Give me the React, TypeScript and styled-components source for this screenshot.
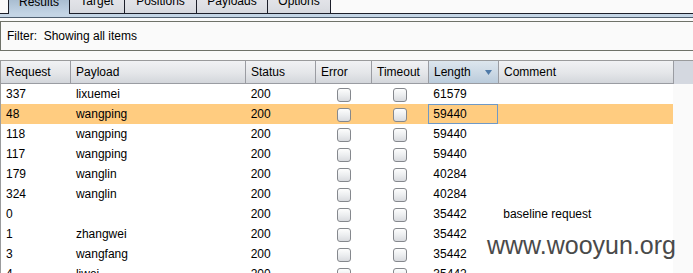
import React from "react";
import styled, { createGlobalStyle } from "styled-components";

const GlobalStyle = createGlobalStyle`
  html, body { margin: 0; padding: 0; background: #fafafa; overflow: hidden; }
  body { font-family: "Liberation Sans", Arial, sans-serif; font-size: 12px; color: #000; }
  * { box-sizing: border-box; }
`;

const Page = styled.div`
  position: relative;
  width: 693px;
  height: 273px;
  overflow: hidden;
  background: #fafafa;
`;

const TabRow = styled.div`
  display: flex;
  align-items: flex-start;
  height: 14px;
  padding-left: 8px;
  border-bottom: 1px solid #1c1f2a;
`;

const Tab = styled.div<{ $w: number; $active?: boolean; $first?: boolean }>`
  width: ${(p) => p.$w}px;
  height: ${(p) => (p.$active ? 14 : 13)}px;
  display: flex;
  align-items: flex-end;
  justify-content: center;
  overflow: hidden;
  border-right: 1px solid #1c1f2a;
  border-left: ${(p) => (p.$first ? "1px solid #1c1f2a" : "none")};
  background: ${(p) =>
    p.$active
      ? "linear-gradient(#a9bdd1, #bccee0 70%, #c4d5e5)"
      : "linear-gradient(#e2e3e8, #dcdee3 60%, #d6d8de)"};
`;

const TabLabel = styled.span`
  line-height: 14px;
  margin-bottom: ${(p) => 5}px;
  white-space: nowrap;
`;

const Band = styled.div`
  height: 4px;
  background: #c4d5e5;
  border-bottom: 1px solid #4f5f70;
`;

const FilterBox = styled.div`
  margin-top: 3px;
  height: 30px;
  display: flex;
  align-items: center;
  padding-left: 6px;
  border-top: 1px solid #6f7269;
  border-bottom: 1px solid #6f7269;
  border-left: 1px solid #6f7269;
  background: #fafafa;
  white-space: pre;
`;

const TablePane = styled.div`
  margin-top: 9px;
  border-top: 1px solid #9a9b9c;
  border-left: 1px solid #9a9b9c;
  background: #fafafa;
`;

const HeaderRow = styled.div`
  display: flex;
  height: 23px;
`;

const HeaderCell = styled.div<{ $w: number; $sorted?: boolean }>`
  width: ${(p) => p.$w}px;
  height: 23px;
  display: flex;
  align-items: center;
  padding-left: 5px;
  padding-right: 6px;
  border-right: 1px solid #9a9ca2;
  border-bottom: 1px solid #9a9ca2;
  background: ${(p) =>
    p.$sorted
      ? "linear-gradient(#dde6ee, #cbd8e4 55%, #bacbdb)"
      : "linear-gradient(#f1f2f4, #e4e6e9 55%, #d3d6db)"};
  white-space: nowrap;
`;

const HeaderFiller = styled.div`
  flex: 1;
  background: #d4d8e0;
`;

const SortArrow = styled.svg`
  margin-left: auto;
  display: block;
`;

const Row = styled.div<{ $selected?: boolean }>`
  display: flex;
  width: 672px;
  height: 20px;
  background: ${(p) => (p.$selected ? "#ffcc80" : "#ffffff")};
`;

const Cell = styled.div<{ $w: number; $center?: boolean; $focus?: boolean }>`
  width: ${(p) => p.$w}px;
  height: 20px;
  display: flex;
  align-items: center;
  justify-content: ${(p) => (p.$center ? "center" : "flex-start")};
  padding-left: ${(p) => (p.$center ? 0 : 5)}px;
  white-space: nowrap;
  box-shadow: ${(p) => (p.$focus ? "inset 0 0 0 1px #6f99c6" : "none")};
`;

const CheckBox = styled.span`
  display: block;
  width: 14px;
  height: 14px;
  margin-top: 1px;
  border: 1px solid #85888d;
  border-radius: 3px;
  background: linear-gradient(#fdfdfd, #eceef0 50%, #d9dbdf);
`;

const Watermark = styled.div`
  position: absolute;
  left: 487px;
  top: 233px;
  font-family: "Liberation Sans", Arial, sans-serif;
  font-size: 25px;
  line-height: 25px;
  color: #4a4a4a;
  white-space: nowrap;
`;

const tabs = [
  { label: "Results", w: 62, active: true },
  { label: "Target", w: 55 },
  { label: "Positions", w: 72 },
  { label: "Payloads", w: 71 },
  { label: "Options", w: 63 },
];

const cols = [
  { label: "Request", w: 70 },
  { label: "Payload", w: 175 },
  { label: "Status", w: 70 },
  { label: "Error", w: 56 },
  { label: "Timeout", w: 57 },
  { label: "Length", w: 70, sorted: true },
  { label: "Comment", w: 175 },
];

const rows = [
  ["337", "lixuemei", "200", "61579", ""],
  ["48", "wangping", "200", "59440", ""],
  ["118", "wangping", "200", "59440", ""],
  ["117", "wangping", "200", "59440", ""],
  ["179", "wanglin", "200", "40284", ""],
  ["324", "wanglin", "200", "40284", ""],
  ["0", "", "200", "35442", "baseline request"],
  ["1", "zhangwei", "200", "35442", ""],
  ["3", "wangfang", "200", "35442", ""],
  ["4", "liwei", "200", "35442", ""],
];

export default function App() {
  return (
    <Page>
      <GlobalStyle />
      <TabRow>
        {tabs.map((t, i) => (
          <Tab key={t.label} $w={t.w} $active={t.active} $first={i === 0}>
            <TabLabel>{t.label}</TabLabel>
          </Tab>
        ))}
      </TabRow>
      <Band />
      <FilterBox>{"Filter:  Showing all items"}</FilterBox>
      <TablePane>
        <HeaderRow>
          {cols.map((c) => (
            <HeaderCell key={c.label} $w={c.w} $sorted={c.sorted}>
              {c.label}
              {c.sorted && (
                <SortArrow width="7" height="5" viewBox="0 0 7 5">
                  <polygon points="0,0 7,0 3.5,5" fill="#4f7aa8" />
                </SortArrow>
              )}
            </HeaderCell>
          ))}
          <HeaderFiller />
        </HeaderRow>
        {rows.map((r, i) => (
          <Row key={i} $selected={i === 1}>
            <Cell $w={70}>{r[0]}</Cell>
            <Cell $w={175}>{r[1]}</Cell>
            <Cell $w={70}>{r[2]}</Cell>
            <Cell $w={56} $center>
              <CheckBox />
            </Cell>
            <Cell $w={57} $center>
              <CheckBox />
            </Cell>
            <Cell $w={70} $focus={i === 1}>
              {r[3]}
            </Cell>
            <Cell $w={175}>{r[4]}</Cell>
          </Row>
        ))}
      </TablePane>
      <Watermark>www.wooyun.org</Watermark>
    </Page>
  );
}
